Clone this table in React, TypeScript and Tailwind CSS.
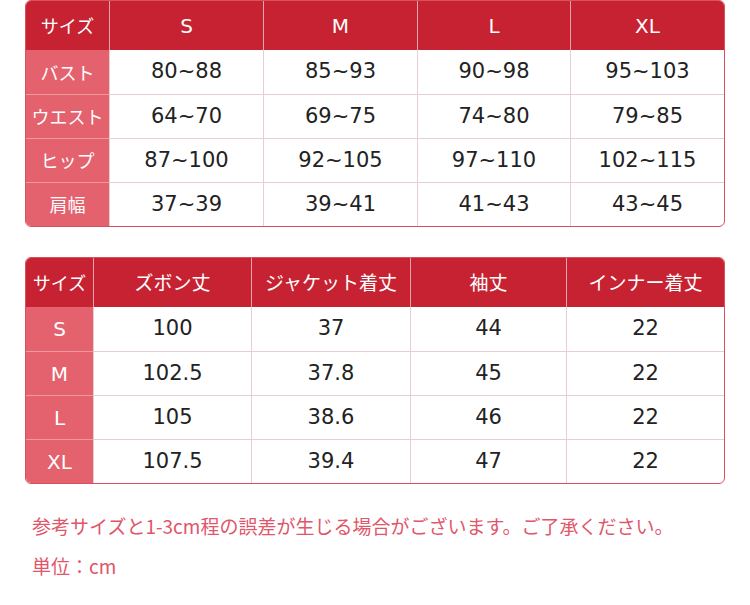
const jp = "font-['Meiryo','Noto_Sans_CJK_JP',sans-serif]";
const num = "font-['Verdana','DejaVu_Sans','Noto_Sans_CJK_JP',sans-serif]";

const sizes1 = ["S", "M", "L", "XL"];
const rows1 = [
  { label: "バスト", values: ["80~88", "85~93", "90~98", "95~103"] },
  { label: "ウエスト", values: ["64~70", "69~75", "74~80", "79~85"] },
  { label: "ヒップ", values: ["87~100", "92~105", "97~110", "102~115"] },
  { label: "肩幅", values: ["37~39", "39~41", "41~43", "43~45"] },
];

const heads2 = ["ズボン丈", "ジャケット着丈", "袖丈", "インナー着丈"];
const rows2 = [
  { label: "S", values: ["100", "37", "44", "22"] },
  { label: "M", values: ["102.5", "37.8", "45", "22"] },
  { label: "L", values: ["105", "38.6", "46", "22"] },
  { label: "XL", values: ["107.5", "39.4", "47", "22"] },
];

function Table1() {
  return (
    <div className="w-[700px] rounded-[6px] border border-[#d9505f] overflow-hidden bg-white">
      <div className="grid grid-cols-[83px_154px_154px_153px_154px]">
        <div className={`h-[49px] flex items-center justify-center bg-[#c62232] text-white text-[18px] ${jp}`}>サイズ</div>
        {sizes1.map((s) => (
          <div key={s} className={`h-[49px] flex items-center justify-center bg-[#c62232] text-white text-[20px] border-l border-[#eaa3aa] ${num}`}>
            {s}
          </div>
        ))}
        {rows1.map((r, i) => (
          <>
            <div key={r.label} className={`h-[44px] flex items-center justify-center bg-[#e4616e] text-white text-[18px] ${jp} ${i > 0 ? "border-t border-[#ee9aa3]" : ""}`}>
              {r.label}
            </div>
            {r.values.map((v, j) => (
              <div key={r.label + j} className={`h-[44px] flex items-center justify-center text-[#222] text-[21px] border-l border-[#e6cfd2] ${num} ${i > 0 ? "border-t" : ""}`}>
                {v}
              </div>
            ))}
          </>
        ))}
      </div>
    </div>
  );
}

function Table2() {
  return (
    <div className="w-[700px] rounded-[6px] border border-[#d9505f] overflow-hidden bg-white">
      <div className="grid grid-cols-[67px_158px_159px_156px_158px]">
        <div className={`h-[49px] flex items-center justify-center bg-[#c62232] text-white text-[18px] ${jp}`}>サイズ</div>
        {heads2.map((h) => (
          <div key={h} className={`h-[49px] flex items-center justify-center bg-[#c62232] text-white text-[19px] border-l border-[#eaa3aa] ${jp}`}>
            {h}
          </div>
        ))}
        {rows2.map((r, i) => (
          <>
            <div key={r.label} className={`h-[44px] flex items-center justify-center bg-[#e4616e] text-white text-[20px] ${num} ${i > 0 ? "border-t border-[#ee9aa3]" : ""}`}>
              {r.label}
            </div>
            {r.values.map((v, j) => (
              <div key={r.label + j} className={`h-[44px] flex items-center justify-center text-[#222] text-[21px] border-l border-[#e6cfd2] ${num} ${i > 0 ? "border-t" : ""}`}>
                {v}
              </div>
            ))}
          </>
        ))}
      </div>
    </div>
  );
}

export default function App() {
  return (
    <div className="w-[750px] h-[605px] bg-white pl-[25px]">
      <Table1 />
      <div className="mt-[30px]">
        <Table2 />
      </div>
      <div className={`mt-[22px] pl-[7px] text-[#e0566a] text-[19px] leading-[40px] ${jp}`}>
        <p>参考サイズと1-3cm程の誤差が生じる場合がございます。ご了承ください。</p>
        <p>単位：cm</p>
      </div>
    </div>
  );
}
